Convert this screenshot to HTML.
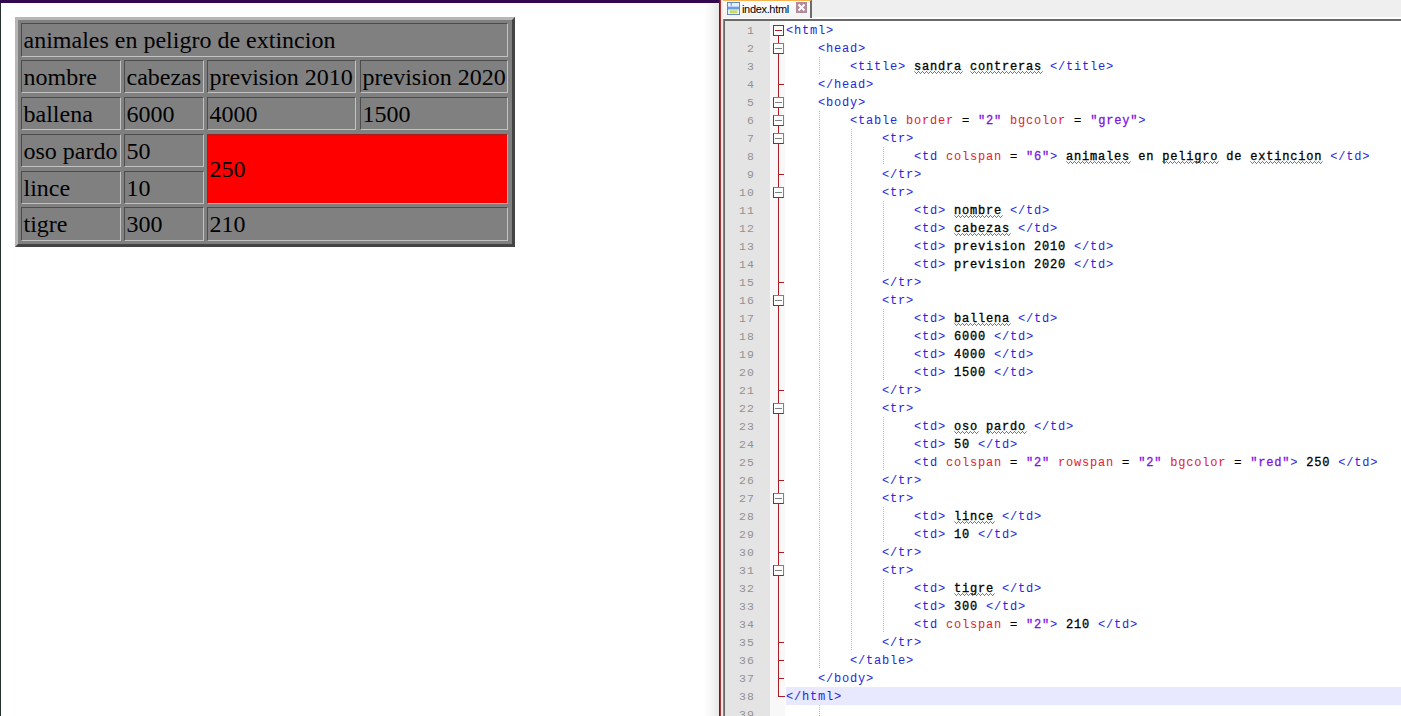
<!DOCTYPE html>
<html><head><meta charset="utf-8"><title>sandra contreras</title>
<style>
html,body{margin:0;padding:0}
body{width:1401px;height:716px;position:relative;overflow:hidden;background:#fff;font-family:"Liberation Serif",serif}
#page{position:absolute;left:0;top:0;width:1401px;height:716px;overflow:hidden;background:#fff}
#page div,#page i,#page b{position:absolute;box-sizing:border-box;display:block}
#topbar{left:0;top:0;width:719px;height:3px;background:#32084f}
#ledge{left:0;top:3px;width:1px;height:713px;background:#26302a}
#tbl{left:15px;top:17px;width:500px;height:230px;background:#808080;border:3px solid;border-color:#b6b6b6 #444 #444 #b6b6b6}
#tbl .c{margin:-3px 0 0 -3px;border:1px solid;border-color:#4c4c4c #c2c2c2 #c2c2c2 #4c4c4c;padding:0 0 0 1.5px;font-size:24px;color:#000;white-space:nowrap;background:#808080}
#tbl .c.red{background:#fe0000;border-color:#a02020 #ff9c9c #ff9c9c #a02020}
/* notepad */
#vg{left:703px;top:3px;width:16px;height:713px;background:linear-gradient(to right,#ffffff,#f6f7f6 50%,#e4e8e6)}
#v1{left:719px;top:0;width:1px;height:716px;background:#3a3030}
#v2{left:720px;top:0;width:1px;height:716px;background:#a43a3a}
#v3{left:721px;top:0;width:2px;height:716px;background:#ffe9e7}
#tabbar{left:723px;top:0;width:678px;height:19px;background:#efefef;border-bottom:2px solid #fdfdfd}
#tab{left:0;top:0;width:89px;height:18px;background:linear-gradient(#fdfdfd,#f2f2f2);border-top:1px solid #f8b450;border-right:2px solid #6c6c6c;font-family:"Liberation Sans",sans-serif;font-size:11px;line-height:14px;color:#000}
#tab span{position:absolute;left:19px;top:1px;letter-spacing:-0.33px}
#edtop{left:723px;top:19px;width:678px;height:2px;background:#6a6a6a}
#edleft{left:723px;top:19px;width:2px;height:697px;background:#666;border-left:1px solid #85867c}
#nm{left:725px;top:21px;width:45px;height:695px;background:#e4e4e4}
#fm{left:770px;top:21px;width:15px;height:695px;background:#f8f8f8}
#ed{left:0;top:0;width:1401px;height:716px;font-family:"Liberation Mono",monospace;font-size:12px;letter-spacing:0.8px}
.ln{left:786px;width:615px;height:18px;line-height:20px;white-space:pre;color:#000}
.ln.cur{background:#e8e8ff}
.n{left:725px;width:30px;height:18px;line-height:20px;text-align:right;color:#929292;font-size:11.5px;letter-spacing:1.1px}
.t{color:#2626de} .a{color:#e4202c} .v{color:#7a14e6;-webkit-text-stroke:0.3px #7a14e6} .x{color:#000;-webkit-text-stroke:0.3px #000}
.q{position:relative}
.q svg{position:absolute;left:0;top:11px;overflow:visible} .q polyline{fill:none;stroke:#c81818;stroke-width:1}
.g{width:1px;height:18px;background:repeating-linear-gradient(to bottom,#b8b8b8 0,#b8b8b8 1px,transparent 1px,transparent 2px)}
#fl{left:778px;top:36px;width:1px;height:661px;background:#ac1c22}
#fe{left:778px;top:696px;width:7px;height:1px;background:#ac1c22}
.ft{left:778px;width:6px;height:1px;background:#ac1c22}
.fb{left:773px;width:11px;height:11px;background:#fff;border:1px solid;border-color:#808080 #808080 #ac1c22 #ac1c22}
.fb b{left:1px;top:4px;width:7px;height:1px;background:#808080}
.fb.r{border-color:#ac1c22} .fb.r b{background:#ac1c22}
</style></head><body>
<div id="page">
<div id="topbar"></div><div id="ledge"></div>
<div id="tbl">
<div class="c " style="left:6px;top:6px;width:487px;height:34px;line-height:32px">animales en peligro de extincion</div>
<div class="c " style="left:6px;top:43px;width:100px;height:33px;line-height:32px">nombre</div>
<div class="c " style="left:109px;top:43px;width:80px;height:33px;line-height:32px">cabezas</div>
<div class="c " style="left:192px;top:43px;width:149px;height:33px;line-height:32px">prevision 2010</div>
<div class="c " style="left:345px;top:43px;width:148px;height:33px;line-height:32px">prevision 2020</div>
<div class="c " style="left:6px;top:80px;width:100px;height:33px;line-height:32px">ballena</div>
<div class="c " style="left:109px;top:80px;width:80px;height:33px;line-height:32px">6000</div>
<div class="c " style="left:192px;top:80px;width:149px;height:33px;line-height:32px">4000</div>
<div class="c " style="left:345px;top:80px;width:148px;height:33px;line-height:32px">1500</div>
<div class="c " style="left:6px;top:117px;width:100px;height:33px;line-height:32px">oso pardo</div>
<div class="c " style="left:109px;top:117px;width:80px;height:33px;line-height:32px">50</div>
<div class="c red" style="left:192px;top:117px;width:301px;height:70px;line-height:68px">250</div>
<div class="c " style="left:6px;top:154px;width:100px;height:33px;line-height:32px">lince</div>
<div class="c " style="left:109px;top:154px;width:80px;height:33px;line-height:32px">10</div>
<div class="c " style="left:6px;top:190px;width:100px;height:34px;line-height:32px">tigre</div>
<div class="c " style="left:109px;top:190px;width:80px;height:34px;line-height:32px">300</div>
<div class="c " style="left:192px;top:190px;width:301px;height:34px;line-height:32px">210</div>
</div>
<div id="vg"></div><div id="v1"></div><div id="v2"></div><div id="v3"></div>
<div id="tabbar"><div id="tab">
<svg style="position:absolute;left:4px;top:1px" width="13" height="13" viewBox="0 0 14 14"><rect x="0.5" y="0.5" width="13" height="13" fill="#e8f2ff" stroke="#5a80c0"/><rect x="1" y="5" width="12" height="3" fill="#6aa0e0"/><rect x="3" y="9" width="8" height="3" fill="#c8d860"/><rect x="4" y="1" width="1" height="3" fill="#5a80c0"/></svg>
<span>index.html</span>
<svg style="position:absolute;left:73px;top:1px" width="11" height="11" viewBox="0 0 11 11"><rect width="11" height="11" fill="#b08c9a"/><path d="M2.5 2.5L8.5 8.5M8.5 2.5L2.5 8.5" stroke="#fff" stroke-width="2"/></svg>
</div></div>
<div id="edtop"></div><div id="edleft"></div>
<div id="nm"></div><div id="fm"></div>
<div id="ed">
<div class="ln" style="top:21px;padding-left:0px"><span class="t">&lt;html&gt;</span></div>
<div class="ln" style="top:39px;padding-left:32px"><span class="t">&lt;head&gt;</span></div>
<div class="ln" style="top:57px;padding-left:64px"><span class="t">&lt;title&gt;</span><span class="x"> <span class="q">sandra<svg width="49" height="3" viewBox="0 0 49 3"><polyline points="0.5,0.5 1.5,1.5 2.5,2.5 3.5,1.5 4.5,0.5 5.5,1.5 6.5,2.5 7.5,1.5 8.5,0.5 9.5,1.5 10.5,2.5 11.5,1.5 12.5,0.5 13.5,1.5 14.5,2.5 15.5,1.5 16.5,0.5 17.5,1.5 18.5,2.5 19.5,1.5 20.5,0.5 21.5,1.5 22.5,2.5 23.5,1.5 24.5,0.5 25.5,1.5 26.5,2.5 27.5,1.5 28.5,0.5 29.5,1.5 30.5,2.5 31.5,1.5 32.5,0.5 33.5,1.5 34.5,2.5 35.5,1.5 36.5,0.5 37.5,1.5 38.5,2.5 39.5,1.5 40.5,0.5 41.5,1.5 42.5,2.5 43.5,1.5 44.5,0.5 45.5,1.5 46.5,2.5 47.5,1.5 48.5,0.5"/></svg></span> <span class="q">contreras<svg width="73" height="3" viewBox="0 0 73 3"><polyline points="0.5,0.5 1.5,1.5 2.5,2.5 3.5,1.5 4.5,0.5 5.5,1.5 6.5,2.5 7.5,1.5 8.5,0.5 9.5,1.5 10.5,2.5 11.5,1.5 12.5,0.5 13.5,1.5 14.5,2.5 15.5,1.5 16.5,0.5 17.5,1.5 18.5,2.5 19.5,1.5 20.5,0.5 21.5,1.5 22.5,2.5 23.5,1.5 24.5,0.5 25.5,1.5 26.5,2.5 27.5,1.5 28.5,0.5 29.5,1.5 30.5,2.5 31.5,1.5 32.5,0.5 33.5,1.5 34.5,2.5 35.5,1.5 36.5,0.5 37.5,1.5 38.5,2.5 39.5,1.5 40.5,0.5 41.5,1.5 42.5,2.5 43.5,1.5 44.5,0.5 45.5,1.5 46.5,2.5 47.5,1.5 48.5,0.5 49.5,1.5 50.5,2.5 51.5,1.5 52.5,0.5 53.5,1.5 54.5,2.5 55.5,1.5 56.5,0.5 57.5,1.5 58.5,2.5 59.5,1.5 60.5,0.5 61.5,1.5 62.5,2.5 63.5,1.5 64.5,0.5 65.5,1.5 66.5,2.5 67.5,1.5 68.5,0.5 69.5,1.5 70.5,2.5 71.5,1.5 72.5,0.5"/></svg></span> </span><span class="t">&lt;/title&gt;</span></div>
<div class="ln" style="top:75px;padding-left:32px"><span class="t">&lt;/head&gt;</span></div>
<div class="ln" style="top:93px;padding-left:32px"><span class="t">&lt;body&gt;</span></div>
<div class="ln" style="top:111px;padding-left:64px"><span class="t">&lt;table</span> <span class="a">border</span><span class="x"> = </span><span class="v">&quot;2&quot;</span> <span class="a">bgcolor</span><span class="x"> = </span><span class="v">&quot;grey&quot;</span><span class="t">&gt;</span></div>
<div class="ln" style="top:129px;padding-left:96px"><span class="t">&lt;tr&gt;</span></div>
<div class="ln" style="top:147px;padding-left:128px"><span class="t">&lt;td</span> <span class="a">colspan</span><span class="x"> = </span><span class="v">&quot;6&quot;</span><span class="t">&gt;</span><span class="x"> <span class="q">animales<svg width="65" height="3" viewBox="0 0 65 3"><polyline points="0.5,0.5 1.5,1.5 2.5,2.5 3.5,1.5 4.5,0.5 5.5,1.5 6.5,2.5 7.5,1.5 8.5,0.5 9.5,1.5 10.5,2.5 11.5,1.5 12.5,0.5 13.5,1.5 14.5,2.5 15.5,1.5 16.5,0.5 17.5,1.5 18.5,2.5 19.5,1.5 20.5,0.5 21.5,1.5 22.5,2.5 23.5,1.5 24.5,0.5 25.5,1.5 26.5,2.5 27.5,1.5 28.5,0.5 29.5,1.5 30.5,2.5 31.5,1.5 32.5,0.5 33.5,1.5 34.5,2.5 35.5,1.5 36.5,0.5 37.5,1.5 38.5,2.5 39.5,1.5 40.5,0.5 41.5,1.5 42.5,2.5 43.5,1.5 44.5,0.5 45.5,1.5 46.5,2.5 47.5,1.5 48.5,0.5 49.5,1.5 50.5,2.5 51.5,1.5 52.5,0.5 53.5,1.5 54.5,2.5 55.5,1.5 56.5,0.5 57.5,1.5 58.5,2.5 59.5,1.5 60.5,0.5 61.5,1.5 62.5,2.5 63.5,1.5 64.5,0.5"/></svg></span> en <span class="q">peligro<svg width="57" height="3" viewBox="0 0 57 3"><polyline points="0.5,0.5 1.5,1.5 2.5,2.5 3.5,1.5 4.5,0.5 5.5,1.5 6.5,2.5 7.5,1.5 8.5,0.5 9.5,1.5 10.5,2.5 11.5,1.5 12.5,0.5 13.5,1.5 14.5,2.5 15.5,1.5 16.5,0.5 17.5,1.5 18.5,2.5 19.5,1.5 20.5,0.5 21.5,1.5 22.5,2.5 23.5,1.5 24.5,0.5 25.5,1.5 26.5,2.5 27.5,1.5 28.5,0.5 29.5,1.5 30.5,2.5 31.5,1.5 32.5,0.5 33.5,1.5 34.5,2.5 35.5,1.5 36.5,0.5 37.5,1.5 38.5,2.5 39.5,1.5 40.5,0.5 41.5,1.5 42.5,2.5 43.5,1.5 44.5,0.5 45.5,1.5 46.5,2.5 47.5,1.5 48.5,0.5 49.5,1.5 50.5,2.5 51.5,1.5 52.5,0.5 53.5,1.5 54.5,2.5 55.5,1.5 56.5,0.5"/></svg></span> de <span class="q">extincion<svg width="73" height="3" viewBox="0 0 73 3"><polyline points="0.5,0.5 1.5,1.5 2.5,2.5 3.5,1.5 4.5,0.5 5.5,1.5 6.5,2.5 7.5,1.5 8.5,0.5 9.5,1.5 10.5,2.5 11.5,1.5 12.5,0.5 13.5,1.5 14.5,2.5 15.5,1.5 16.5,0.5 17.5,1.5 18.5,2.5 19.5,1.5 20.5,0.5 21.5,1.5 22.5,2.5 23.5,1.5 24.5,0.5 25.5,1.5 26.5,2.5 27.5,1.5 28.5,0.5 29.5,1.5 30.5,2.5 31.5,1.5 32.5,0.5 33.5,1.5 34.5,2.5 35.5,1.5 36.5,0.5 37.5,1.5 38.5,2.5 39.5,1.5 40.5,0.5 41.5,1.5 42.5,2.5 43.5,1.5 44.5,0.5 45.5,1.5 46.5,2.5 47.5,1.5 48.5,0.5 49.5,1.5 50.5,2.5 51.5,1.5 52.5,0.5 53.5,1.5 54.5,2.5 55.5,1.5 56.5,0.5 57.5,1.5 58.5,2.5 59.5,1.5 60.5,0.5 61.5,1.5 62.5,2.5 63.5,1.5 64.5,0.5 65.5,1.5 66.5,2.5 67.5,1.5 68.5,0.5 69.5,1.5 70.5,2.5 71.5,1.5 72.5,0.5"/></svg></span> </span><span class="t">&lt;/td&gt;</span></div>
<div class="ln" style="top:165px;padding-left:96px"><span class="t">&lt;/tr&gt;</span></div>
<div class="ln" style="top:183px;padding-left:96px"><span class="t">&lt;tr&gt;</span></div>
<div class="ln" style="top:201px;padding-left:128px"><span class="t">&lt;td</span><span class="t">&gt;</span><span class="x"> <span class="q">nombre<svg width="49" height="3" viewBox="0 0 49 3"><polyline points="0.5,0.5 1.5,1.5 2.5,2.5 3.5,1.5 4.5,0.5 5.5,1.5 6.5,2.5 7.5,1.5 8.5,0.5 9.5,1.5 10.5,2.5 11.5,1.5 12.5,0.5 13.5,1.5 14.5,2.5 15.5,1.5 16.5,0.5 17.5,1.5 18.5,2.5 19.5,1.5 20.5,0.5 21.5,1.5 22.5,2.5 23.5,1.5 24.5,0.5 25.5,1.5 26.5,2.5 27.5,1.5 28.5,0.5 29.5,1.5 30.5,2.5 31.5,1.5 32.5,0.5 33.5,1.5 34.5,2.5 35.5,1.5 36.5,0.5 37.5,1.5 38.5,2.5 39.5,1.5 40.5,0.5 41.5,1.5 42.5,2.5 43.5,1.5 44.5,0.5 45.5,1.5 46.5,2.5 47.5,1.5 48.5,0.5"/></svg></span> </span><span class="t">&lt;/td&gt;</span></div>
<div class="ln" style="top:219px;padding-left:128px"><span class="t">&lt;td</span><span class="t">&gt;</span><span class="x"> <span class="q">cabezas<svg width="57" height="3" viewBox="0 0 57 3"><polyline points="0.5,0.5 1.5,1.5 2.5,2.5 3.5,1.5 4.5,0.5 5.5,1.5 6.5,2.5 7.5,1.5 8.5,0.5 9.5,1.5 10.5,2.5 11.5,1.5 12.5,0.5 13.5,1.5 14.5,2.5 15.5,1.5 16.5,0.5 17.5,1.5 18.5,2.5 19.5,1.5 20.5,0.5 21.5,1.5 22.5,2.5 23.5,1.5 24.5,0.5 25.5,1.5 26.5,2.5 27.5,1.5 28.5,0.5 29.5,1.5 30.5,2.5 31.5,1.5 32.5,0.5 33.5,1.5 34.5,2.5 35.5,1.5 36.5,0.5 37.5,1.5 38.5,2.5 39.5,1.5 40.5,0.5 41.5,1.5 42.5,2.5 43.5,1.5 44.5,0.5 45.5,1.5 46.5,2.5 47.5,1.5 48.5,0.5 49.5,1.5 50.5,2.5 51.5,1.5 52.5,0.5 53.5,1.5 54.5,2.5 55.5,1.5 56.5,0.5"/></svg></span> </span><span class="t">&lt;/td&gt;</span></div>
<div class="ln" style="top:237px;padding-left:128px"><span class="t">&lt;td</span><span class="t">&gt;</span><span class="x"> prevision 2010 </span><span class="t">&lt;/td&gt;</span></div>
<div class="ln" style="top:255px;padding-left:128px"><span class="t">&lt;td</span><span class="t">&gt;</span><span class="x"> prevision 2020 </span><span class="t">&lt;/td&gt;</span></div>
<div class="ln" style="top:273px;padding-left:96px"><span class="t">&lt;/tr&gt;</span></div>
<div class="ln" style="top:291px;padding-left:96px"><span class="t">&lt;tr&gt;</span></div>
<div class="ln" style="top:309px;padding-left:128px"><span class="t">&lt;td</span><span class="t">&gt;</span><span class="x"> <span class="q">ballena<svg width="57" height="3" viewBox="0 0 57 3"><polyline points="0.5,0.5 1.5,1.5 2.5,2.5 3.5,1.5 4.5,0.5 5.5,1.5 6.5,2.5 7.5,1.5 8.5,0.5 9.5,1.5 10.5,2.5 11.5,1.5 12.5,0.5 13.5,1.5 14.5,2.5 15.5,1.5 16.5,0.5 17.5,1.5 18.5,2.5 19.5,1.5 20.5,0.5 21.5,1.5 22.5,2.5 23.5,1.5 24.5,0.5 25.5,1.5 26.5,2.5 27.5,1.5 28.5,0.5 29.5,1.5 30.5,2.5 31.5,1.5 32.5,0.5 33.5,1.5 34.5,2.5 35.5,1.5 36.5,0.5 37.5,1.5 38.5,2.5 39.5,1.5 40.5,0.5 41.5,1.5 42.5,2.5 43.5,1.5 44.5,0.5 45.5,1.5 46.5,2.5 47.5,1.5 48.5,0.5 49.5,1.5 50.5,2.5 51.5,1.5 52.5,0.5 53.5,1.5 54.5,2.5 55.5,1.5 56.5,0.5"/></svg></span> </span><span class="t">&lt;/td&gt;</span></div>
<div class="ln" style="top:327px;padding-left:128px"><span class="t">&lt;td</span><span class="t">&gt;</span><span class="x"> 6000 </span><span class="t">&lt;/td&gt;</span></div>
<div class="ln" style="top:345px;padding-left:128px"><span class="t">&lt;td</span><span class="t">&gt;</span><span class="x"> 4000 </span><span class="t">&lt;/td&gt;</span></div>
<div class="ln" style="top:363px;padding-left:128px"><span class="t">&lt;td</span><span class="t">&gt;</span><span class="x"> 1500 </span><span class="t">&lt;/td&gt;</span></div>
<div class="ln" style="top:381px;padding-left:96px"><span class="t">&lt;/tr&gt;</span></div>
<div class="ln" style="top:399px;padding-left:96px"><span class="t">&lt;tr&gt;</span></div>
<div class="ln" style="top:417px;padding-left:128px"><span class="t">&lt;td</span><span class="t">&gt;</span><span class="x"> <span class="q">oso<svg width="25" height="3" viewBox="0 0 25 3"><polyline points="0.5,0.5 1.5,1.5 2.5,2.5 3.5,1.5 4.5,0.5 5.5,1.5 6.5,2.5 7.5,1.5 8.5,0.5 9.5,1.5 10.5,2.5 11.5,1.5 12.5,0.5 13.5,1.5 14.5,2.5 15.5,1.5 16.5,0.5 17.5,1.5 18.5,2.5 19.5,1.5 20.5,0.5 21.5,1.5 22.5,2.5 23.5,1.5 24.5,0.5"/></svg></span> <span class="q">pardo<svg width="41" height="3" viewBox="0 0 41 3"><polyline points="0.5,0.5 1.5,1.5 2.5,2.5 3.5,1.5 4.5,0.5 5.5,1.5 6.5,2.5 7.5,1.5 8.5,0.5 9.5,1.5 10.5,2.5 11.5,1.5 12.5,0.5 13.5,1.5 14.5,2.5 15.5,1.5 16.5,0.5 17.5,1.5 18.5,2.5 19.5,1.5 20.5,0.5 21.5,1.5 22.5,2.5 23.5,1.5 24.5,0.5 25.5,1.5 26.5,2.5 27.5,1.5 28.5,0.5 29.5,1.5 30.5,2.5 31.5,1.5 32.5,0.5 33.5,1.5 34.5,2.5 35.5,1.5 36.5,0.5 37.5,1.5 38.5,2.5 39.5,1.5 40.5,0.5"/></svg></span> </span><span class="t">&lt;/td&gt;</span></div>
<div class="ln" style="top:435px;padding-left:128px"><span class="t">&lt;td</span><span class="t">&gt;</span><span class="x"> 50 </span><span class="t">&lt;/td&gt;</span></div>
<div class="ln" style="top:453px;padding-left:128px"><span class="t">&lt;td</span> <span class="a">colspan</span><span class="x"> = </span><span class="v">&quot;2&quot;</span> <span class="a">rowspan</span><span class="x"> = </span><span class="v">&quot;2&quot;</span> <span class="a">bgcolor</span><span class="x"> = </span><span class="v">&quot;red&quot;</span><span class="t">&gt;</span><span class="x"> 250 </span><span class="t">&lt;/td&gt;</span></div>
<div class="ln" style="top:471px;padding-left:96px"><span class="t">&lt;/tr&gt;</span></div>
<div class="ln" style="top:489px;padding-left:96px"><span class="t">&lt;tr&gt;</span></div>
<div class="ln" style="top:507px;padding-left:128px"><span class="t">&lt;td</span><span class="t">&gt;</span><span class="x"> <span class="q">lince<svg width="41" height="3" viewBox="0 0 41 3"><polyline points="0.5,0.5 1.5,1.5 2.5,2.5 3.5,1.5 4.5,0.5 5.5,1.5 6.5,2.5 7.5,1.5 8.5,0.5 9.5,1.5 10.5,2.5 11.5,1.5 12.5,0.5 13.5,1.5 14.5,2.5 15.5,1.5 16.5,0.5 17.5,1.5 18.5,2.5 19.5,1.5 20.5,0.5 21.5,1.5 22.5,2.5 23.5,1.5 24.5,0.5 25.5,1.5 26.5,2.5 27.5,1.5 28.5,0.5 29.5,1.5 30.5,2.5 31.5,1.5 32.5,0.5 33.5,1.5 34.5,2.5 35.5,1.5 36.5,0.5 37.5,1.5 38.5,2.5 39.5,1.5 40.5,0.5"/></svg></span> </span><span class="t">&lt;/td&gt;</span></div>
<div class="ln" style="top:525px;padding-left:128px"><span class="t">&lt;td</span><span class="t">&gt;</span><span class="x"> 10 </span><span class="t">&lt;/td&gt;</span></div>
<div class="ln" style="top:543px;padding-left:96px"><span class="t">&lt;/tr&gt;</span></div>
<div class="ln" style="top:561px;padding-left:96px"><span class="t">&lt;tr&gt;</span></div>
<div class="ln" style="top:579px;padding-left:128px"><span class="t">&lt;td</span><span class="t">&gt;</span><span class="x"> <span class="q">tigre<svg width="41" height="3" viewBox="0 0 41 3"><polyline points="0.5,0.5 1.5,1.5 2.5,2.5 3.5,1.5 4.5,0.5 5.5,1.5 6.5,2.5 7.5,1.5 8.5,0.5 9.5,1.5 10.5,2.5 11.5,1.5 12.5,0.5 13.5,1.5 14.5,2.5 15.5,1.5 16.5,0.5 17.5,1.5 18.5,2.5 19.5,1.5 20.5,0.5 21.5,1.5 22.5,2.5 23.5,1.5 24.5,0.5 25.5,1.5 26.5,2.5 27.5,1.5 28.5,0.5 29.5,1.5 30.5,2.5 31.5,1.5 32.5,0.5 33.5,1.5 34.5,2.5 35.5,1.5 36.5,0.5 37.5,1.5 38.5,2.5 39.5,1.5 40.5,0.5"/></svg></span> </span><span class="t">&lt;/td&gt;</span></div>
<div class="ln" style="top:597px;padding-left:128px"><span class="t">&lt;td</span><span class="t">&gt;</span><span class="x"> 300 </span><span class="t">&lt;/td&gt;</span></div>
<div class="ln" style="top:615px;padding-left:128px"><span class="t">&lt;td</span> <span class="a">colspan</span><span class="x"> = </span><span class="v">&quot;2&quot;</span><span class="t">&gt;</span><span class="x"> 210 </span><span class="t">&lt;/td&gt;</span></div>
<div class="ln" style="top:633px;padding-left:96px"><span class="t">&lt;/tr&gt;</span></div>
<div class="ln" style="top:651px;padding-left:64px"><span class="t">&lt;/table&gt;</span></div>
<div class="ln" style="top:669px;padding-left:32px"><span class="t">&lt;/body&gt;</span></div>
<div class="ln cur" style="top:687px;padding-left:0px"><span class="t">&lt;/html&gt;</span></div>
<div class="ln" style="top:705px;padding-left:0px"></div>
<div class="n" style="top:21px">1</div>
<div class="n" style="top:39px">2</div>
<div class="n" style="top:57px">3</div>
<div class="n" style="top:75px">4</div>
<div class="n" style="top:93px">5</div>
<div class="n" style="top:111px">6</div>
<div class="n" style="top:129px">7</div>
<div class="n" style="top:147px">8</div>
<div class="n" style="top:165px">9</div>
<div class="n" style="top:183px">10</div>
<div class="n" style="top:201px">11</div>
<div class="n" style="top:219px">12</div>
<div class="n" style="top:237px">13</div>
<div class="n" style="top:255px">14</div>
<div class="n" style="top:273px">15</div>
<div class="n" style="top:291px">16</div>
<div class="n" style="top:309px">17</div>
<div class="n" style="top:327px">18</div>
<div class="n" style="top:345px">19</div>
<div class="n" style="top:363px">20</div>
<div class="n" style="top:381px">21</div>
<div class="n" style="top:399px">22</div>
<div class="n" style="top:417px">23</div>
<div class="n" style="top:435px">24</div>
<div class="n" style="top:453px">25</div>
<div class="n" style="top:471px">26</div>
<div class="n" style="top:489px">27</div>
<div class="n" style="top:507px">28</div>
<div class="n" style="top:525px">29</div>
<div class="n" style="top:543px">30</div>
<div class="n" style="top:561px">31</div>
<div class="n" style="top:579px">32</div>
<div class="n" style="top:597px">33</div>
<div class="n" style="top:615px">34</div>
<div class="n" style="top:633px">35</div>
<div class="n" style="top:651px">36</div>
<div class="n" style="top:669px">37</div>
<div class="n" style="top:687px">38</div>
<div class="n" style="top:705px">39</div>
<i class="g" style="left:819px;top:57px"></i>
<i class="g" style="left:819px;top:111px"></i>
<i class="g" style="left:819px;top:129px"></i>
<i class="g" style="left:851px;top:129px"></i>
<i class="g" style="left:819px;top:147px"></i>
<i class="g" style="left:851px;top:147px"></i>
<i class="g" style="left:883px;top:147px"></i>
<i class="g" style="left:819px;top:165px"></i>
<i class="g" style="left:851px;top:165px"></i>
<i class="g" style="left:819px;top:183px"></i>
<i class="g" style="left:851px;top:183px"></i>
<i class="g" style="left:819px;top:201px"></i>
<i class="g" style="left:851px;top:201px"></i>
<i class="g" style="left:883px;top:201px"></i>
<i class="g" style="left:819px;top:219px"></i>
<i class="g" style="left:851px;top:219px"></i>
<i class="g" style="left:883px;top:219px"></i>
<i class="g" style="left:819px;top:237px"></i>
<i class="g" style="left:851px;top:237px"></i>
<i class="g" style="left:883px;top:237px"></i>
<i class="g" style="left:819px;top:255px"></i>
<i class="g" style="left:851px;top:255px"></i>
<i class="g" style="left:883px;top:255px"></i>
<i class="g" style="left:819px;top:273px"></i>
<i class="g" style="left:851px;top:273px"></i>
<i class="g" style="left:819px;top:291px"></i>
<i class="g" style="left:851px;top:291px"></i>
<i class="g" style="left:819px;top:309px"></i>
<i class="g" style="left:851px;top:309px"></i>
<i class="g" style="left:883px;top:309px"></i>
<i class="g" style="left:819px;top:327px"></i>
<i class="g" style="left:851px;top:327px"></i>
<i class="g" style="left:883px;top:327px"></i>
<i class="g" style="left:819px;top:345px"></i>
<i class="g" style="left:851px;top:345px"></i>
<i class="g" style="left:883px;top:345px"></i>
<i class="g" style="left:819px;top:363px"></i>
<i class="g" style="left:851px;top:363px"></i>
<i class="g" style="left:883px;top:363px"></i>
<i class="g" style="left:819px;top:381px"></i>
<i class="g" style="left:851px;top:381px"></i>
<i class="g" style="left:819px;top:399px"></i>
<i class="g" style="left:851px;top:399px"></i>
<i class="g" style="left:819px;top:417px"></i>
<i class="g" style="left:851px;top:417px"></i>
<i class="g" style="left:883px;top:417px"></i>
<i class="g" style="left:819px;top:435px"></i>
<i class="g" style="left:851px;top:435px"></i>
<i class="g" style="left:883px;top:435px"></i>
<i class="g" style="left:819px;top:453px"></i>
<i class="g" style="left:851px;top:453px"></i>
<i class="g" style="left:883px;top:453px"></i>
<i class="g" style="left:819px;top:471px"></i>
<i class="g" style="left:851px;top:471px"></i>
<i class="g" style="left:819px;top:489px"></i>
<i class="g" style="left:851px;top:489px"></i>
<i class="g" style="left:819px;top:507px"></i>
<i class="g" style="left:851px;top:507px"></i>
<i class="g" style="left:883px;top:507px"></i>
<i class="g" style="left:819px;top:525px"></i>
<i class="g" style="left:851px;top:525px"></i>
<i class="g" style="left:883px;top:525px"></i>
<i class="g" style="left:819px;top:543px"></i>
<i class="g" style="left:851px;top:543px"></i>
<i class="g" style="left:819px;top:561px"></i>
<i class="g" style="left:851px;top:561px"></i>
<i class="g" style="left:819px;top:579px"></i>
<i class="g" style="left:851px;top:579px"></i>
<i class="g" style="left:883px;top:579px"></i>
<i class="g" style="left:819px;top:597px"></i>
<i class="g" style="left:851px;top:597px"></i>
<i class="g" style="left:883px;top:597px"></i>
<i class="g" style="left:819px;top:615px"></i>
<i class="g" style="left:851px;top:615px"></i>
<i class="g" style="left:883px;top:615px"></i>
<i class="g" style="left:819px;top:633px"></i>
<i class="g" style="left:851px;top:633px"></i>
<i class="g" style="left:819px;top:651px"></i>
<i class="g" style="left:819px;top:705px"></i>
<i id="fl"></i><i id="fe"></i>
<i class="fb r" style="top:25px"><b></b></i>
<i class="fb" style="top:43px"><b></b></i>
<i class="ft" style="top:84px"></i>
<i class="fb" style="top:97px"><b></b></i>
<i class="fb" style="top:115px"><b></b></i>
<i class="fb" style="top:133px"><b></b></i>
<i class="ft" style="top:174px"></i>
<i class="fb" style="top:187px"><b></b></i>
<i class="ft" style="top:282px"></i>
<i class="fb" style="top:295px"><b></b></i>
<i class="ft" style="top:390px"></i>
<i class="fb" style="top:403px"><b></b></i>
<i class="ft" style="top:480px"></i>
<i class="fb" style="top:493px"><b></b></i>
<i class="ft" style="top:552px"></i>
<i class="fb" style="top:565px"><b></b></i>
<i class="ft" style="top:642px"></i>
<i class="ft" style="top:660px"></i>
<i class="ft" style="top:678px"></i>
</div>
</div>
</body></html>
